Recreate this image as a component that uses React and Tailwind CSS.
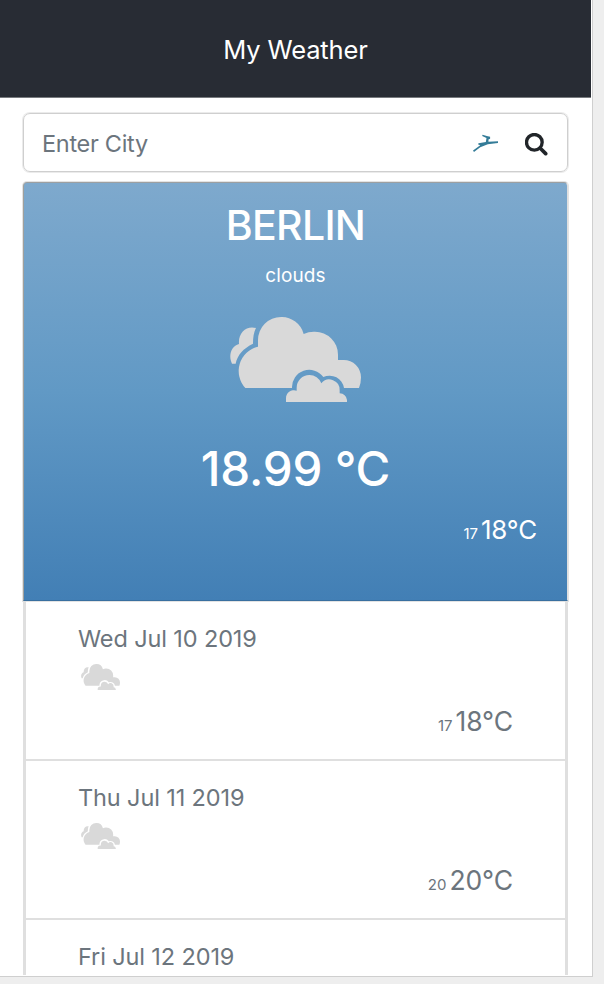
function Clouds({ className }) {
  return (
    <svg viewBox="60 51 393 255" preserveAspectRatio="none" fill="#d9d9d9" className={className}>
      <path d="M106 264A75 75 0 0 1 144 140V120A69 69 0 0 1 213 51A69 69 0 0 1 281 102A69 69 0 0 1 315 95A69 69 0 0 1 384 164V180H401A52 52 0 0 1 453 232Q453 250 447 264H402A44 44 0 0 0 340 231A52 52 0 0 0 246 264Z" />
      <path d="M228 306V296A24 24 0 0 1 260 272V263A38 38 0 0 1 298 225A38 38 0 0 1 334 250A31 31 0 0 1 389 271V280A24 24 0 0 1 411 300V306Z" />
      <path d="M138 84C110 76 84 97 87 132C64 137 54 168 66 191H77C82 165 100 145 129 131C129 113 131 97 138 84Z" />
    </svg>
  );
}

function Bird() {
  return (
    <svg viewBox="0 0 76 54" fill="#347c98" className="block h-[18px] w-[25px]">
      <path d="M0 50L22 34L15 31L17 28L39 24L41 12L28 6L29 2L42 6L52 8L52 14L47 16L47 23L76 22L76 27L45 31L22 40L3 54Z" />
    </svg>
  );
}

function Search() {
  return (
    <svg viewBox="0 0 69 69" fill="none" stroke="#212529" className="block size-[23px]">
      <circle cx="28" cy="28" r="23.5" strokeWidth="10" />
      <path d="M45 45L62 62" strokeWidth="11" strokeLinecap="round" />
    </svg>
  );
}

function Day({ date, low, high }) {
  return (
    <div className="h-[159px] shrink-0 border-b-2 border-[#dfdfdf] pl-[52px] pr-[52px] pt-[19px] text-[#6c757d]">
      <div className="text-[23.5px] leading-[36px] tracking-[-0.12px]">{date}</div>
      <Clouds className="ml-[3px] mt-[7px] block h-[26px] w-[39px]" />
      {high && (
        <div className="mt-[13px] flex items-baseline justify-end gap-[3px] leading-[36px]">
          <span className="text-[15px]">{low}</span>
          <span className="text-[26.5px] tracking-[-0.1px]">{high}°C</span>
        </div>
      )}
    </div>
  );
}

export default function App() {
  return (
    <div className="h-[984px] w-[604px] overflow-hidden bg-[#eeeeee] font-['Inter',sans-serif] font-normal whitespace-nowrap">
      <div className="flex h-[977px] w-[593px] flex-col overflow-hidden border-r border-b border-[#cfcfcf] bg-white">
        <header className="flex h-[98px] w-[591px] shrink-0 items-center justify-center border-b border-[#777a7e] bg-[#282c34] text-[25.5px] tracking-[-0.15px] text-white">
          <span className="mt-[4px]">My Weather</span>
        </header>
        <div className="ml-[23px] mt-[15px] flex h-[59px] w-[545px] shrink-0 items-center rounded-[7px] border border-[#cfcfcf] pl-[18px] pr-[19px] ring-1 ring-[#ebebeb]">
          <span className="mt-[3px] text-[23.5px] tracking-[-0.3px] text-[#6c757d]">Enter City</span>
          <div className="ml-auto mr-[27px]">
            <Bird />
          </div>
          <div className="mt-[3px]">
            <Search />
          </div>
        </div>
        <div className="ml-[23px] mt-[10px] flex h-[793px] w-[545px] shrink-0 flex-col">
          <section className="h-[419px] shrink-0 rounded-t-[4px] border-x border-t border-b border-t-[#9c9fa1] border-r-[#dfdfdf] border-b-[#386f9f] border-l-[#a0a09c] bg-linear-to-b from-[#7ea9cd] via-[#6199c5] to-[#427fb5] text-center text-white ring-1 ring-[#e3e3e3]">
            <h1 className="mt-[16px] text-[41px] leading-[52px] font-medium tracking-[-0.7px]">BERLIN</h1>
            <p className="mt-[10px] text-[19px] leading-[30px] tracking-[0.1px]">clouds</p>
            <Clouds className="mx-auto mt-[26px] block h-[85px] w-[131px]" />
            <p className="mt-[38px] text-[47.5px] leading-[58px] font-medium tracking-[-0.2px]">18.99 °C</p>
            <div className="mt-[14px] flex items-baseline justify-end gap-[3px] pr-[30px] leading-[36px]">
              <span className="text-[15px]">17</span>
              <span className="text-[26px] tracking-[-0.2px]">18°C</span>
            </div>
          </section>
          <section className="flex h-[374px] flex-col overflow-hidden border-x-[3px] border-[#dfdfdf] pt-px">
            <Day date="Wed Jul 10 2019" low="17" high="18" />
            <Day date="Thu Jul 11 2019" low="20" high="20" />
            <Day date="Fri Jul 12 2019" />
          </section>
        </div>
      </div>
    </div>
  );
}
